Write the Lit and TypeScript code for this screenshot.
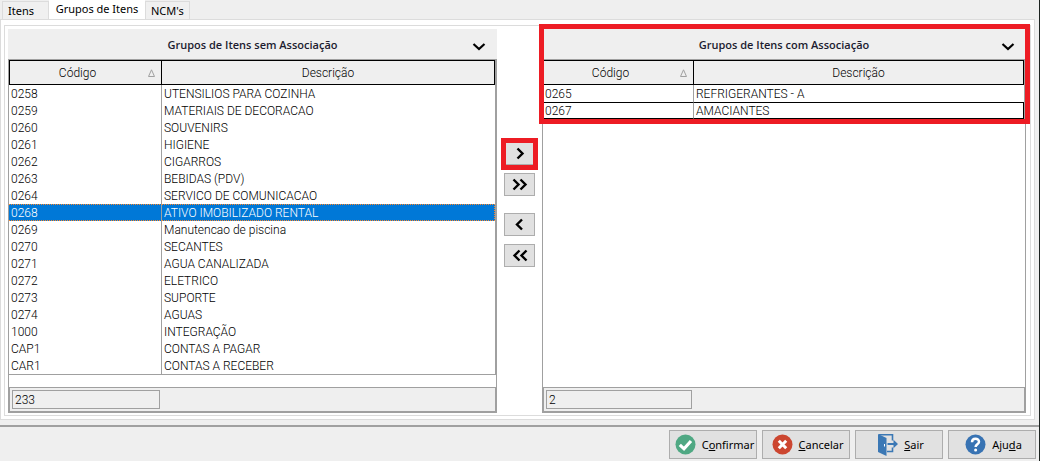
import { LitElement, html, css, svg, nothing } from "lit";
import { customElement, property, state } from "lit/decorators.js";
import { classMap } from "lit/directives/class-map.js";

type Row = [string, string];

const available: Row[] = [
  ["0258", "UTENSILIOS PARA COZINHA"],
  ["0259", "MATERIAIS DE DECORACAO"],
  ["0260", "SOUVENIRS"],
  ["0261", "HIGIENE"],
  ["0262", "CIGARROS"],
  ["0263", "BEBIDAS (PDV)"],
  ["0264", "SERVICO DE COMUNICACAO"],
  ["0268", "ATIVO IMOBILIZADO RENTAL"],
  ["0269", "Manutencao de piscina"],
  ["0270", "SECANTES"],
  ["0271", "AGUA CANALIZADA"],
  ["0272", "ELETRICO"],
  ["0273", "SUPORTE"],
  ["0274", "AGUAS"],
  ["1000", "INTEGRAÇÃO"],
  ["CAP1", "CONTAS A PAGAR"],
  ["CAR1", "CONTAS A RECEBER"],
];

const associated: Row[] = [
  ["0265", "REFRIGERANTES - A"],
  ["0267", "AMACIANTES"],
];

@customElement("group-grid")
export class GroupGrid extends LitElement {
  @property() heading = "";
  @property() count = "";
  @property({ attribute: false }) rows: Row[] = [];
  @property() selected = "";
  @property() focused = "";
  @property({ type: Boolean }) marked = false;
  @property({ type: Boolean }) closed = false;

  static styles = css`
    :host {
      display: flex;
      flex-direction: column;
      position: relative;
      min-width: 0;
      font: 300 12px/16px Roboto, "Liberation Sans", sans-serif;
      color: #000;
    }
    .title {
      display: grid;
      grid-template-columns: 36px 1fr 36px;
      align-items: center;
      height: 30px;
      background: #efefef;
    }
    h2 {
      grid-column: 2;
      margin: 0;
      padding-top: 2px;
      text-align: center;
      font: 600 11px/16px "Open Sans", "Noto Sans", sans-serif;
      color: #1c1c30;
      white-space: nowrap;
    }
    .menu {
      border: 0;
      padding: 4px 0 0;
      background: none;
      height: 30px;
    }
    .menu svg {
      display: block;
      margin: 0 auto;
    }
    .frame {
      display: flex;
      flex-direction: column;
      flex: 1;
      border: 1px solid #a0a0a0;
      border-bottom-width: 2px;
    }
    .body {
      flex: 1;
      padding-bottom: 12px;
    }
    table {
      width: 100%;
      table-layout: fixed;
      border-collapse: separate;
      border-spacing: 0;
      border-right: 1px solid #a0a0a0;
    }
    .closed table {
      border-bottom: 1px solid #a0a0a0;
    }
    thead th {
      box-sizing: border-box;
      height: 25px;
      padding: 0;
      background: #efefef;
      border: solid #000;
      border-width: 1px 0 1px 1px;
      font-weight: inherit;
      position: relative;
    }
    thead th:first-child {
      width: 153px;
      border-right: 1px solid #000;
      padding-right: 16px;
    }
    :host([marked]) thead th:first-child {
      width: 151px;
    }
    thead th:last-child {
      border-left: 0;
      border-right: 1px solid #000;
    }
    .sort {
      position: absolute;
      right: 5px;
      top: 8px;
    }
    td {
      box-sizing: border-box;
      height: 17px;
      padding: 3px 2px 1px;
      line-height: 13px;
      white-space: nowrap;
    }
    td:first-child {
      border-right: 1px solid #a0a0a0;
    }
    .selected td,
    .focused td {
      padding: 2px 2px 0;
    }
    .selected td {
      background: #0078d7;
      color: #fff;
      border-top: 1px dotted #ff8728;
      border-bottom: 1px dotted #ff8728;
    }
    .selected td:last-child {
      border-right: 1px dotted #ff8728;
    }
    .focused td {
      border-top: 1px solid #000;
      border-bottom: 1px solid #000;
    }
    .focused td:last-child {
      border-right: 1px solid #000;
    }
    .footer {
      display: flex;
      padding: 2px;
      border: solid #a0a0a0;
      border-width: 1px 1px 0;
      background: #efefef;
    }
    input {
      box-sizing: border-box;
      width: 148px;
      height: 19px;
      padding: 0 2px;
      border: 1px solid #a0a0a0;
      border-radius: 0;
      background: #efefef;
      font: inherit;
      color: inherit;
    }
    :host([marked]) input {
      width: 146px;
    }
    .outline {
      position: absolute;
      inset: -5px -4px auto -3px;
      height: 90px;
      border: 5px solid #ed1c24;
      pointer-events: none;
    }
  `;

  render() {
    return html`
      <div class="title">
        <h2 id="heading">${this.heading}</h2>
        <button class="menu" aria-label="Opções">
          <svg width="14" height="10" viewBox="0 0 14 10">
            <path d="M1.5 3 7 8 12.5 3" fill="none" stroke="#000" stroke-width="2.2" />
          </svg>
        </button>
      </div>
      <div class="frame">
        <div class=${classMap({ body: true, closed: this.closed })}>
          <table aria-labelledby="heading">
            <thead>
              <tr>
                <th scope="col">
                  Código
                  <svg class="sort" width="9" height="8" viewBox="0 0 9 8">
                    <path d="M1.5 7.5H7.5L4.5 .8Z" fill="none" stroke="#a0a0a0" />
                  </svg>
                </th>
                <th scope="col">Descrição</th>
              </tr>
            </thead>
            <tbody>
              ${this.rows.map(
                ([code, text]) => html`
                  <tr class=${classMap({ selected: code === this.selected, focused: code === this.focused })}>
                    <td>${code}</td>
                    <td>${text}</td>
                  </tr>
                `,
              )}
            </tbody>
          </table>
        </div>
        <div class="footer">
          <input aria-label="Total de registros" readonly .value=${this.count} />
        </div>
      </div>
      ${this.marked ? html`<div class="outline"></div>` : nothing}
    `;
  }
}

const moves = [
  { label: "Associar", paths: ["M12.5 1.5 17.5 6.5 12.5 11.5"], marked: true },
  { label: "Associar todos", paths: ["M8.5 1.5 13.5 6.5 8.5 11.5", "M15.5 1.5 20.5 6.5 15.5 11.5"] },
  { label: "Desassociar", paths: ["M17 1.5 12 6.5 17 11.5"], apart: true },
  { label: "Desassociar todos", paths: ["M14.5 1.5 9.5 6.5 14.5 11.5", "M21.5 1.5 16.5 6.5 21.5 11.5"] },
];

const icons = {
  ok: svg`<circle cx="10.5" cy="10.5" r="10" fill="#4fa883"/><path d="M4.8 10.8 9 14.8 16 7" fill="none" stroke="#fff" stroke-width="3.2"/>`,
  cancel: svg`<circle cx="10.5" cy="10.5" r="10" fill="#cc4630"/><path d="M6.8 6.8 14.2 14.2M14.2 6.8 6.8 14.2" fill="none" stroke="#fff" stroke-width="3"/>`,
  exit: svg`<path d="M1 0 9.5 4V22L1 18Z" fill="#3b78b5"/><path d="M2 .8H15.5V6.500M15.5 13.500V17.5H10" fill="none" stroke="#3b78b5" stroke-width="1.6"/><path d="M10.5 9H16.500V5.8L21 10 16.500 14.2V11H10.5Z" fill="#3b78b5"/><path d="M7.5 10v2.5" stroke="#fff"/>`,
  help: svg`<circle cx="10.5" cy="10.5" r="10" fill="#3873b3"/><path d="M7 8.2C7 3.8 14 3.8 14 7.8 14 10.3 10.6 10.3 10.6 13" fill="none" stroke="#fff" stroke-width="2.5"/><circle cx="10.6" cy="16" r="1.5" fill="#fff"/>`,
};

@customElement("app-root")
export class AppRoot extends LitElement {
  @state() private tab = "Grupos de Itens";

  static styles = css`
    :host {
      display: flex;
      flex-direction: column;
      min-height: 100vh;
      box-sizing: border-box;
      background: #efefef;
      border-right: 1px solid #1c2320;
      font: 11px/16px "Noto Sans", "Open Sans", sans-serif;
      color: #000;
    }
    button {
      font: inherit;
      color: inherit;
      border-radius: 0;
    }
    .tabs {
      display: flex;
      align-items: flex-end;
      height: 19px;
      padding-left: 2px;
    }
    .tab {
      box-sizing: border-box;
      height: 18px;
      padding: 0 5px;
      border: 1px solid #dcdcdc;
      border-bottom: 0;
      background: #f0f0f0;
      min-width: 45px;
      text-align: left;
      line-height: 18px;
    }
    .tab:first-child {
      min-width: 47px;
    }
    .tab.active {
      height: 20px;
      padding: 0 6px 2px;
      margin-bottom: -1px;
      background: #fff;
      border: 0;
      line-height: 16px;
      min-width: 96px;
      text-align: center;
    }
    .page {
      flex: 1;
      display: flex;
      margin-right: 4px;
      padding: 5px 3px 3px;
      border: 1px solid #dcdcdc;
      background: #fff;
    }
    .group {
      flex: 1;
      display: grid;
      grid-template-columns: minmax(0, 489fr) 45px minmax(0, 484fr);
      padding: 3px 4px 2px 3px;
      border: 1px solid #dcdcdc;
    }
    .moves {
      display: flex;
      flex-direction: column;
      align-items: center;
      gap: 8px;
      padding-top: 113px;
    }
    .move {
      position: relative;
      display: flex;
    }
    .move.apart {
      margin-top: 9px;
    }
    .move button {
      width: 31px;
      height: 23px;
      padding: 0;
      border: 1px solid #adadad;
      background: #e1e1e1;
    }
    .move svg {
      display: block;
      margin: 0 auto;
    }
    .move.marked::after {
      content: "";
      position: absolute;
      inset: -4px -3px -5px;
      border: 5px solid #ed1c24;
      pointer-events: none;
    }
    .actions {
      display: flex;
      justify-content: flex-end;
      gap: 5px;
      margin-top: 5px;
      padding: 3px 3px 2px;
      border-top: 2px solid #a0a0a0;
    }
    .action {
      display: flex;
      align-items: center;
      justify-content: center;
      gap: 6px;
      box-sizing: border-box;
      width: 88px;
      height: 29px;
      padding: 0 0 0 3px;
      border: 1px solid #adadad;
      background: #e1e1e1;
    }
    .action svg {
      flex: none;
    }
  `;

  render() {
    return html`
      <div class="tabs" role="tablist">
        ${["Itens", "Grupos de Itens", "NCM's"].map(
          (name) => html`<button
            role="tab"
            aria-selected=${name === this.tab}
            class=${classMap({ tab: true, active: name === this.tab })}
            @click=${() => (this.tab = name)}
          >${name}</button>`,
        )}
      </div>
      <main class="page">
        <div class="group">
          <group-grid heading="Grupos de Itens sem Associação" count="233" selected="0268" closed .rows=${available}></group-grid>
          <div class="moves">
            ${moves.map(
              (m) => html`<div class=${classMap({ move: true, marked: !!m.marked, apart: !!m.apart })}>
                <button aria-label=${m.label}>
                  <svg width="29" height="13" viewBox="0 0 29 13">
                    ${m.paths.map((d) => svg`<path d=${d} fill="none" stroke="#000" stroke-width="2.4"/>`)}
                  </svg>
                </button>
              </div>`,
            )}
          </div>
          <group-grid heading="Grupos de Itens com Associação" count="2" focused="0267" marked .rows=${associated}></group-grid>
        </div>
      </main>
      <div class="actions">
        <button class="action">${this.icon(icons.ok)}<span>C<u>o</u>nfirmar</span></button>
        <button class="action">${this.icon(icons.cancel)}<span><u>C</u>ancelar</span></button>
        <button class="action">${this.icon(icons.exit)}<span><u>S</u>air</span></button>
        <button class="action">${this.icon(icons.help)}<span>Aju<u>d</u>a</span></button>
      </div>
    `;
  }

  private icon(shape: unknown) {
    return html`<svg width="21" height="22" viewBox="0 0 21 22" aria-hidden="true">${shape}</svg>`;
  }
}
